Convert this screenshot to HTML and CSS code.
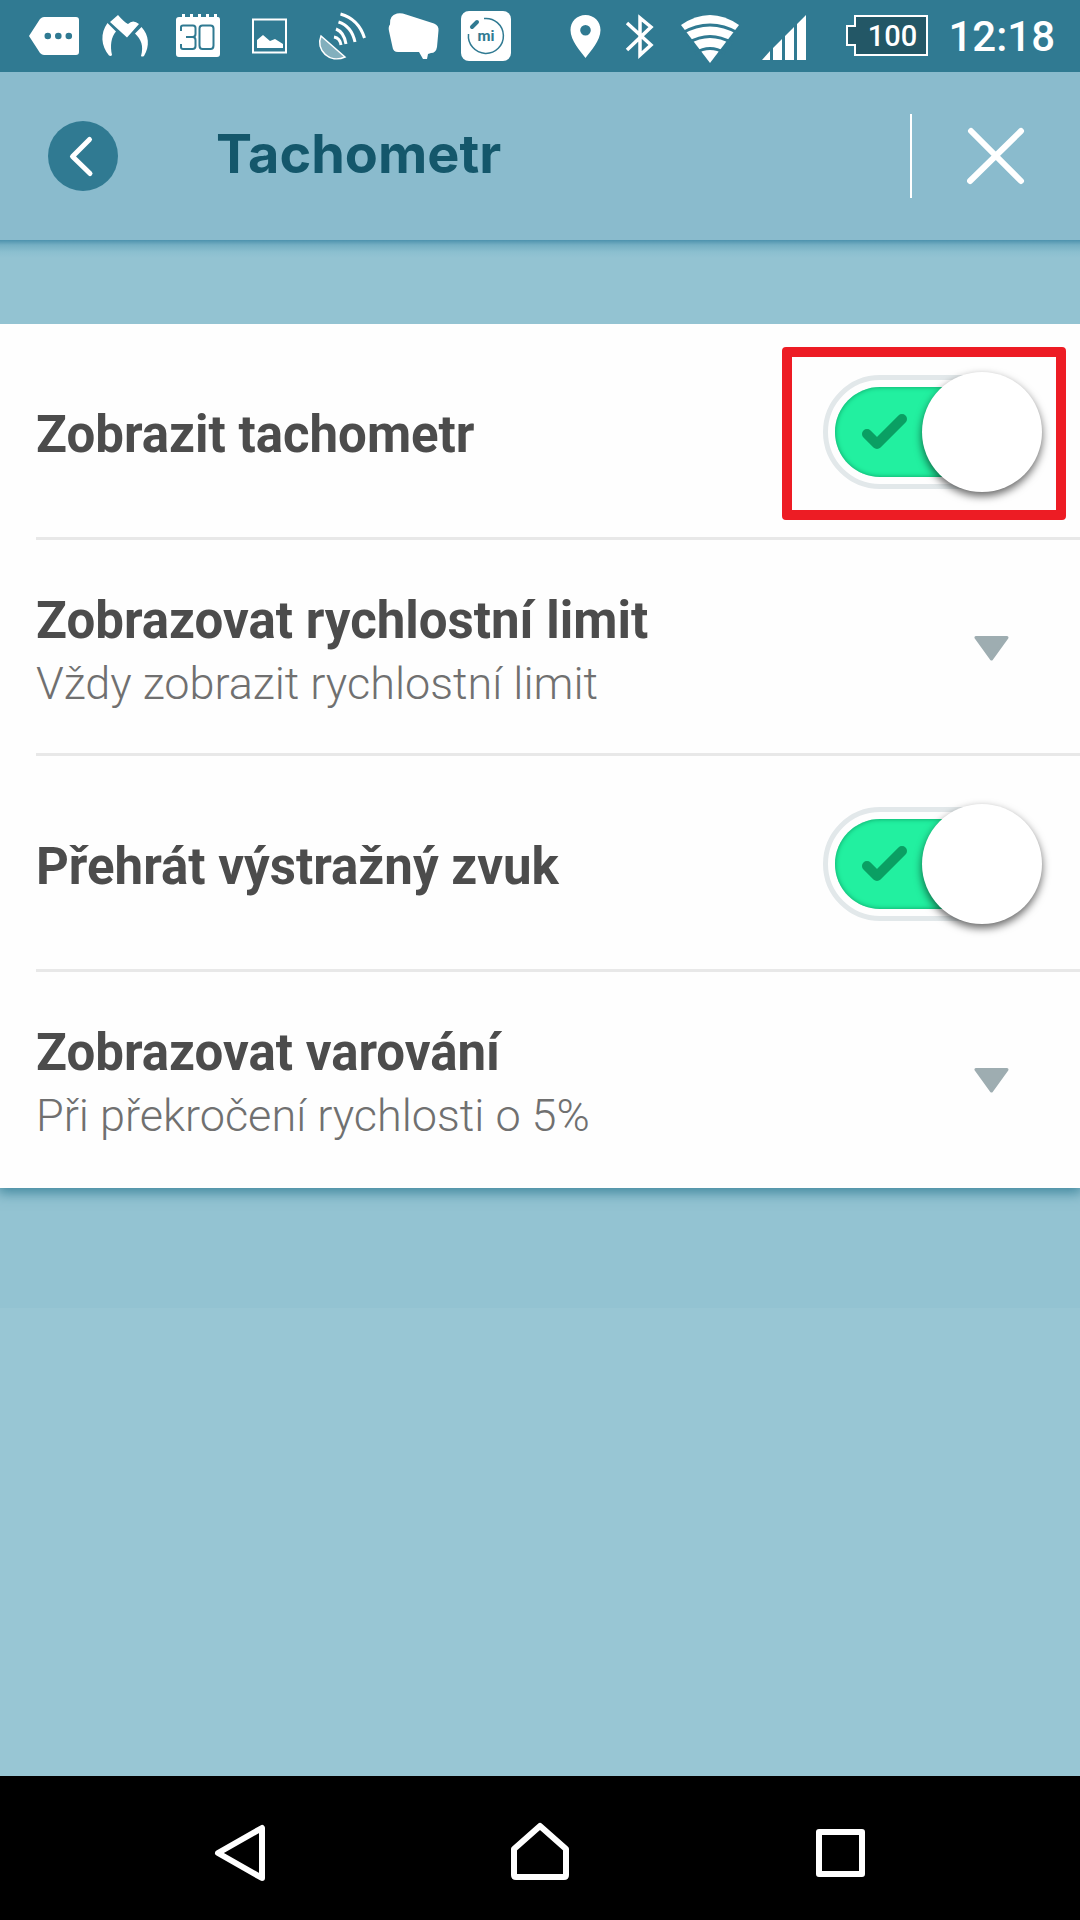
FILE: index.html
```html
<!DOCTYPE html>
<html lang="cs">
<head>
<meta charset="utf-8">
<meta name="viewport" content="width=device-width, initial-scale=1">
<title>Tachometr</title>
<link rel="stylesheet" href="styles.css">
</head>
<body>
<div class="screen">
  <div class="status">
    <div class="status-group">
      <svg class="status-icon" viewBox="0 0 72 72" fill="#fff" aria-hidden="true"><path fill-rule="evenodd" d="M11 36 22 19q2-2 4-2h32q3 0 3 3v32q0 3-3 3H26q-2 0-4-2zM26.500 36a3.300 3.300 0 1 0 6.600 0 3.300 3.300 0 1 0-6.600 0M37 36a3.300 3.300 0 1 0 6.600 0 3.300 3.300 0 1 0-6.600 0M47.500 36a3.300 3.300 0 1 0 6.600 0 3.300 3.300 0 1 0-6.600 0"/></svg>
      <svg class="status-icon" viewBox="0 0 72 72" fill="#fff" aria-hidden="true"><path d="M20 22 28 15q6 7 10 9 5-5 11 0L37 37.500zM17.500 23 26 31.500C21 37 20 46 22 55q-1 1.500-3 .5C11 46 10 33 17.500 23zM51.500 27 45 33.500C51 39 54 46 51 56q1 1 3 0C60 46 59 35 51.500 27z"/></svg>
      <svg class="status-icon" viewBox="0 0 72 72" fill="#fff" aria-hidden="true"><path d="M17 17h3v-3h3v3h5v-3h3v3h5v-3h3v3h5v-3h3v3h5v-3h3v3h1q2 0 2 3v34q0 3-3 3H17q-3 0-3-3V20q0-3 3-3z"/><path d="M19 31v-4q0-1.500 2-1.500h10q2.500 0 2.500 2.500v6q0 3-3 3H24h6.500q3 0 3 3v6q0 3-3 3H21q-2 0-2-2v-3M37.500 28.500q0-3 3-3h8q3 0 3 3v17q0 3.500-3 3.500h-8q-3 0-3-3.500z" fill="none" stroke="#307a92" stroke-width="2"/></svg>
      <svg class="status-icon" viewBox="0 0 72 72" fill="#fff" aria-hidden="true"><path d="M19 19.500h33v33H19z" fill="none" stroke="#fff" stroke-width="2"/><path d="M23 48v-8l6-5 7 6 5-2 8 5v4z"/></svg>
      <svg class="status-icon" viewBox="3 0 72 72" fill="none" stroke="#fff" stroke-width="3" aria-hidden="true"><path d="M18 36C12 50 27 64 42 57z" fill="#fff" fill-opacity=".4" stroke-width="1.500"/><path d="M33 29q8 3 10 15M31 37q6 1 7 8M35.500 22q13 4 16.500 20M37.500 14q18 5 24 24"/></svg>
      <svg class="status-icon" viewBox="0 0 72 72" fill="#fff" aria-hidden="true"><path d="M19 13.500q4-1 9 1l28 9q5 2 4.500 7L59 47q-1 6-6 6l-3 1-1 5h-4l-4-7H20q-5 0-5.500-5L11 31q-1-4 1-6.500-1-9 7-11z"/></svg>
      <svg class="status-icon" viewBox="0 0 72 72" aria-hidden="true"><rect x="11" y="11" width="50" height="50" rx="8" fill="#fff"/><path d="M34 18.500A17.500 17.500 0 1 1 18.500 34" fill="none" stroke="#307a92" stroke-width="1.500"/><path d="m22 27 5-5" stroke="#307a92" stroke-width="4" stroke-linecap="round"/><text class="mi-text" x="36" y="41" text-anchor="middle">mi</text></svg>
    </div>
    <div class="status-group">
      <svg class="icon-narrow" viewBox="0 0 54 72" fill="#fff" aria-hidden="true"><path fill-rule="evenodd" d="M27.500 15c8.500 0 15 6.500 15 15 0 11-10 21-15 28-5-7-15-17-15-28 0-8.500 6.500-15 15-15zm0 10a5.300 5.300 0 1 0 0 10.600 5.300 5.300 0 1 0 0-10.600z"/></svg>
      <svg class="icon-narrow" viewBox="0 0 54 72" fill="none" stroke="#fff" stroke-width="3.500" aria-hidden="true"><path d="m15 23 24 22-11 10V18l11 9-24 23"/></svg>
      <svg class="icon-wifi" viewBox="0 0 88 72" aria-hidden="true"><path d="M44 63 15 25q29-20 58 0z" fill="#fff"/><path d="M16 33q28-16 56 0M22 43q22-13 44 0M29 53q15-9 30 0" fill="none" stroke="#307a92" stroke-width="3"/></svg>
      <svg class="icon-signal" viewBox="0 0 60 72" fill="#fff" aria-hidden="true"><path d="m8 60 8-9v9zM19 60V48l9-9v21zM31 60V36l9-9v33zM43 60V24l9-9v45z"/></svg>
      <div class="battery">
        <svg class="battery-case" viewBox="0 0 84 44" aria-hidden="true"><path d="M9 2h72v39H9V31H1V12h8z" fill="#235766" stroke="#fff" stroke-width="2"/></svg>
        <span class="battery-level">100</span>
      </div>
      <time class="clock">12:18</time>
    </div>
  </div>

  <header class="header">
    <button class="back" type="button" aria-label="Zpět">
      <svg class="back-icon" viewBox="0 0 70 70" aria-hidden="true"><path d="M41.500 18.500 24.500 35.500 42 52.500" fill="none" stroke="#fff" stroke-width="5" stroke-linecap="round" stroke-linejoin="round"/></svg>
    </button>
    <h1 class="title">Tachometr</h1>
    <button class="close" type="button" aria-label="Zavřít">
      <svg class="close-icon" viewBox="0 0 58 58" aria-hidden="true"><path d="m4 4 50 50M54 4 3 54" stroke="#fff" stroke-width="6" stroke-linecap="round"/></svg>
    </button>
  </header>

  <main class="content">
    <div class="list">
      <div class="row">
        <label class="row-title row-text" for="show">Zobrazit tachometr</label>
        <span class="switch">
          <input class="switch-input" id="show" type="checkbox" checked>
          <span class="switch-track"></span>
          <svg class="switch-check" viewBox="0 0 48 36" aria-hidden="true"><path d="m6 19 10 10L41 4" /></svg>
          <span class="switch-knob"></span>
          <span class="highlight"></span>
        </span>
      </div>
      <div class="row">
        <div class="row-text">
          <label class="row-title" for="limit">Zobrazovat rychlostní limit</label>
          <select class="row-select" id="limit"><option>Vždy zobrazit rychlostní limit</option></select>
        </div>
        <svg class="arrow" viewBox="0 0 35 25" aria-hidden="true"><path d="M2 1.500h31L17.500 23z"/></svg>
      </div>
      <div class="row">
        <label class="row-title row-text" for="sound">Přehrát výstražný zvuk</label>
        <span class="switch">
          <input class="switch-input" id="sound" type="checkbox" checked>
          <span class="switch-track"></span>
          <svg class="switch-check" viewBox="0 0 48 36" aria-hidden="true"><path d="m6 19 10 10L41 4" /></svg>
          <span class="switch-knob"></span>
        </span>
      </div>
      <div class="row">
        <div class="row-text">
          <label class="row-title" for="warning">Zobrazovat varování</label>
          <select class="row-select" id="warning"><option>Při překročení rychlosti o 5%</option></select>
        </div>
        <svg class="arrow" viewBox="0 0 35 25" aria-hidden="true"><path d="M2 1.500h31L17.500 23z"/></svg>
      </div>
    </div>
  </main>

  <nav class="nav">
    <button class="nav-button" type="button" aria-label="Zpět"><svg class="nav-icon" viewBox="0 0 72 72"><path d="M58 11v50L14 36z"/></svg></button>
    <button class="nav-button" type="button" aria-label="Domů"><svg class="nav-icon" viewBox="0 0 72 72"><path d="M36 9 10 32v26q0 2 2 2h48q2 0 2-2V32z"/></svg></button>
    <button class="nav-button" type="button" aria-label="Přehled"><svg class="nav-icon" viewBox="0 0 72 72"><path d="M15 15h43v42H15z"/></svg></button>
  </nav>
</div>
</body>
</html>
```

FILE: styles.css
```css
* { box-sizing: border-box; }

body {
  margin: 0;
  background: #98c6d4;
  font-family: Roboto, "Noto Sans", sans-serif;
}

button {
  padding: 0;
  border: 0;
  background: none;
}

svg { display: block; flex: none; }

.screen {
  display: flex;
  flex-direction: column;
  min-height: 100vh;
}

/* Status bar */
.status {
  display: flex;
  justify-content: space-between;
  height: 72px;
  padding: 0 25px 0 18px;
  background: #307a92;
  color: #fff;
}

.status-group { display: flex; align-items: center; }
.status-icon { width: 72px; height: 72px; }
.icon-narrow { width: 54px; height: 72px; }
.icon-wifi { width: 88px; height: 72px; }
.icon-signal { width: 60px; height: 72px; }

.mi-text {
  font: 700 15px Roboto, sans-serif;
  fill: #307a92;
}

.battery {
  display: grid;
  align-items: center;
  margin: 0 18px 0 32px;
}

.battery-case,
.battery-level { grid-area: 1 / 1; }
.battery-case { width: 84px; height: 44px; }

.battery-level {
  padding-left: 8px;
  font-size: 29px;
  font-weight: 500;
  line-height: 44px;
  text-align: center;
}

.clock {
  padding-top: 2px;
  font-size: 42px;
  font-weight: 500;
  line-height: 48px;
}

/* Header */
.header {
  display: flex;
  align-items: center;
  height: 168px;
  padding-left: 48px;
  background: #8abbcd;
}

.back {
  width: 70px;
  height: 70px;
  border-radius: 50%;
  background: #307a92;
}

.back-icon { width: 70px; height: 70px; }

.title {
  flex: 1;
  margin: 0;
  padding: 0 0 4px 98px;
  color: #14576b;
  font-family: Inter, sans-serif;
  font-size: 54px;
  font-weight: 700;
  line-height: 72px;
}

.close {
  display: flex;
  align-items: center;
  height: 84px;
  padding: 0 55px;
  border-left: 2px solid #fff;
}

.close-icon { width: 58px; height: 58px; }

/* Settings */
.content {
  padding: 84px 0 120px;
  background: linear-gradient(#4d92ad, #75afc3 5px, #8bbfcf 12px, #93c3d2 18px);
}

.list {
  background: #fefefe;
  box-shadow: 0 3px 12px 2px #307a92cc;
  clip-path: inset(0 0 -24px 0);
}

.row {
  display: flex;
  align-items: center;
  min-height: 216px;
  margin-left: 36px;
  padding-right: 38px;
  box-shadow: inset 0 -3px #e8e8e8;
}

.row:last-child { box-shadow: none; }

.row-text {
  display: flex;
  flex: 1;
  flex-direction: column;
  gap: 6px;
  padding-top: 6px;
}

.row-title {
  color: #4c4c4c;
  font-size: 51px;
  font-weight: 700;
  line-height: 60px;
}

.row-select {
  height: 54px;
  padding: 0;
  border: 0;
  appearance: none;
  background: none;
  color: #707070;
  font-family: inherit;
  font-size: 45px;
  font-weight: 300;
  line-height: 54px;
}

.arrow {
  width: 35px;
  height: 25px;
  margin-right: 33px;
  fill: #9eadb1;
  stroke: #9eadb1;
  stroke-width: 3;
  stroke-linejoin: round;
}

.switch {
  position: relative;
  flex: none;
  width: 219px;
  height: 120px;
}

.switch-input {
  position: absolute;
  inset: 0;
  z-index: 1;
  width: 100%;
  height: 100%;
  margin: 0;
  opacity: 0;
}

.switch-track {
  position: absolute;
  inset: 3px 12px 3px 0;
  border: 5px solid #e2e8ea;
  border-radius: 57px;
}

.switch-track::before {
  content: "";
  position: absolute;
  inset: 7px;
  border-radius: 45px;
  background: #22f0a0;
  box-shadow: inset 0 0 5px #0a9f63;
}

.switch-check {
  position: absolute;
  top: 43px;
  left: 38px;
  width: 48px;
  height: 36px;
  overflow: visible;
  fill: none;
  stroke: #0a9f63;
  stroke-width: 10;
  stroke-linecap: round;
  stroke-linejoin: round;
}

.switch-knob {
  position: absolute;
  top: 0;
  right: 0;
  width: 120px;
  height: 120px;
  border-radius: 50%;
  background: #fff;
  box-shadow: 0 4px 8px #0009;
}

.highlight {
  position: absolute;
  inset: -25px -24px -28px -41px;
  border: 10px solid #ed1c24;
  border-radius: 4px;
}

/* Navigation bar */
.nav {
  display: grid;
  grid-template-columns: repeat(3, 1fr);
  height: 144px;
  margin-top: auto;
  padding: 10px 90px 0;
  background: #000;
}

.nav-button {
  display: flex;
  align-items: center;
  justify-content: center;
}

.nav-icon {
  width: 72px;
  height: 72px;
  fill: none;
  stroke: #fff;
  stroke-width: 6;
  stroke-linejoin: round;
}
```
